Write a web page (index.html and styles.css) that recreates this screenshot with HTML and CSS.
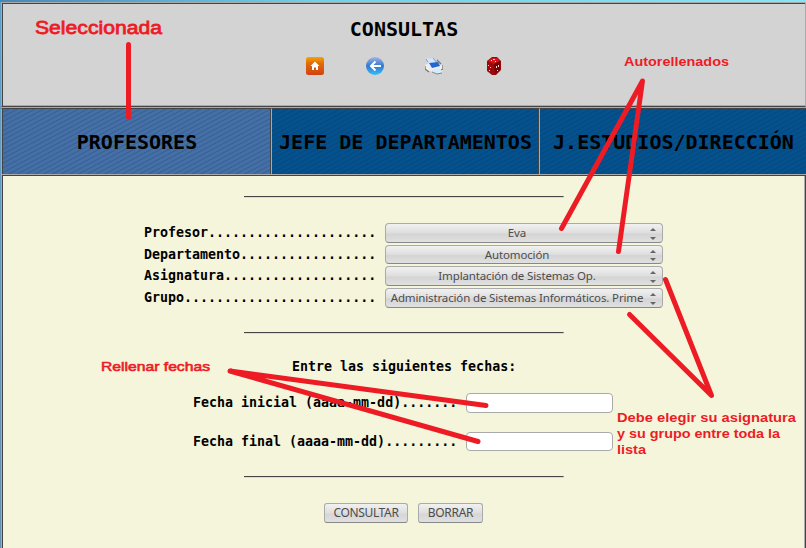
FILE: index.html
```html
<!DOCTYPE html>
<html lang="es">
<head>
<meta charset="utf-8">
<title>Consultas</title>
<link rel="stylesheet" href="styles.css">
</head>
<body>
<div class="page">
  <header class="header">
    <h1>CONSULTAS</h1>
    <nav class="icons">
      <svg viewBox="0 0 18 18"><defs><linearGradient id="home" x1="0" y1="0" x2="0" y2="1"><stop offset="0" stop-color="#f2a500"/><stop offset=".35" stop-color="#e26a0c"/><stop offset="1" stop-color="#cf4310"/></linearGradient></defs><rect width="18" height="18" rx="2.5" fill="url(#home)"/><path d="M9 4.500 4.500 9H6v4h2v-2.500h2V13h2V9h1.500z" fill="#fff"/></svg>
      <svg viewBox="0 0 18 18"><defs><linearGradient id="back" x1="0" y1="0" x2="0" y2="1"><stop offset="0" stop-color="#a6b4e4"/><stop offset=".5" stop-color="#2f78d0"/><stop offset="1" stop-color="#39c0f5"/></linearGradient></defs><circle cx="9" cy="9" r="9" fill="url(#back)"/><path d="M9.500 4.500 5 9l4.500 4.500M5 9h10" fill="none" stroke="#fff" stroke-width="2"/></svg>
      <svg viewBox="0 0 18 18"><path d="M0 8 4 6l13 2 1 5-6 3-11-3z" fill="#eee"/><path d="M0 9v3l4 3M18 8v4l-2 1M12 3l4 4" stroke="#777" stroke-width="1.300" fill="none"/><path d="m1 2 2-1 1 1 4-1 4 5-6 2z" fill="#d3e8ff"/><path d="m1 2 2 3M8 1l4 5" stroke="#6aa4e4" fill="none"/><path d="m4 6 9-1 2 4-8 2z" fill="#2467d0"/><path d="m7 13 7-2 4 4-6 2-5-2z" fill="#d4ecfa"/><path d="m7 15 5 2 5-1" stroke="#888" fill="none"/></svg>
      <svg viewBox="0 0 18 18"><path d="M7 0h5l4 4v9l-5 5H7l-5-4V4z" fill="#9d080c"/><path d="M3 4 7 1h5l3 3-6 3z" fill="#cf171a"/><path d="m9 7 6-3v9l-5 4z" fill="#710407"/><g fill="#ffdcd7"><path d="M8 2h2v1H8zM10 4h1v1h-1zM6 3h1v1H6zM3 8h1v1H3zM5 10h1v1H5zM4 13h1v1H4zM11 9h1v2h-1zM13 8h1v2h-1zM12 13h1v1h-1z"/></g></svg>
    </nav>
  </header>
  <nav class="tabs">
    <div class="tab selected">PROFESORES</div>
    <div class="tab">JEFE DE DEPARTAMENTOS</div>
    <div class="tab">J.ESTUDIOS/DIRECCIÓN</div>
  </nav>
  <main class="body">
    <hr>
    <section class="fields">
      <div class="row"><label>Profesor.....................</label><div class="select"><span>Eva</span><i></i></div></div>
      <div class="row"><label>Departamento.................</label><div class="select short"><span>Automoción</span><i></i></div></div>
      <div class="row"><label>Asignatura...................</label><div class="select"><span>Implantación de Sistemas Op.</span><i></i></div></div>
      <div class="row"><label>Grupo........................</label><div class="select"><span>Administración de Sistemas Informáticos. Prime</span><i></i></div></div>
    </section>
    <hr>
    <h2>Entre las siguientes fechas:</h2>
    <section class="dates">
      <div class="date"><label>Fecha inicial (aaaa-mm-dd).......</label><input type="text"></div>
      <div class="date"><label>Fecha final (aaaa-mm-dd).........</label><input class="short" type="text"></div>
    </section>
    <hr>
    <div class="buttons"><button class="b1">CONSULTAR</button><button class="b2">BORRAR</button></div>
  </main>
</div>
<svg class="notes" width="806" height="548" viewBox="0 0 806 548">
  <g class="strokes">
    <path d="M128.500 44.500V117"/>
    <path d="M561.500 228.500 642.500 81 618.500 251.500"/>
    <path d="M665.500 279.500 711.500 395.500 629.500 314.500"/>
    <path d="M486 405.500 230 371 478 441.500"/>
  </g>
  <g class="labels">
    <text class="big" x="35" y="34" textLength="127" lengthAdjust="spacingAndGlyphs">Seleccionada</text>
    <text x="624" y="66" textLength="105" lengthAdjust="spacingAndGlyphs">Autorellenados</text>
    <text class="light" x="101" y="371" textLength="109" lengthAdjust="spacingAndGlyphs">Rellenar fechas</text>
    <text x="617" y="422" textLength="179" lengthAdjust="spacingAndGlyphs">Debe elegir su asignatura</text>
    <text x="617" y="438" textLength="163" lengthAdjust="spacingAndGlyphs">y su grupo entre toda la</text>
    <text x="617" y="454" textLength="29" lengthAdjust="spacingAndGlyphs">lista</text>
  </g>
</svg>
</body>
</html>
```
FILE: styles.css
```css
* { box-sizing: border-box; }
body {
  margin: 0;
  width: 806px;
  height: 548px;
  overflow: hidden;
  position: relative;
  background: linear-gradient(90deg, #4a86b5, #6fd3ea 40%, #86e6f5);
  font: bold 13.3px/16px "DejaVu Sans Mono", monospace;
  color: #000;
}
.page { padding: 2px 0 0 1px; display: flex; flex-direction: column; height: 548px; background: linear-gradient(#5f9fc8, #6790b0) 0 2px / 1px 546px no-repeat; }
.header {
  height: 105px;
  background: #d3d3d3;
  border: 1px solid #aaa;
  border-bottom-color: #444;
  box-shadow: inset 1px 1px #444, inset 0 -1px #aaa;
  padding-top: 16px;
  text-align: center;
}
h1 { margin: 0; font-size: 20px; line-height: 20px; padding-left: 1px; }
.icons { display: flex; justify-content: center; gap: 41.5px; margin-top: 18px; padding-left: 2px; }
.icons svg { width: 18px; height: 18px; }
.tabs { height: 67px; display: grid; grid-template-columns: 270px 268px 267px; border-top: 1px solid #aaa; }
.tab {
  border-left: 1px solid #aaa;
  border-right: 1px solid #444;
  border-top: 1px solid #444;
  padding-left: 1px;
  display: flex;
  align-items: center;
  justify-content: center;
  white-space: nowrap;
  font-size: 20px;
  background: repeating-linear-gradient(152deg, #045190 0 2.300px, #064a7e 2.800px 3.600px, #045190 4.100px);
}
.tab:last-child { border-right: 0; }
.tab.selected { padding-left: 2px; box-shadow: inset 1px 0 #444; background: repeating-linear-gradient(152deg, #4470a7 0 2.300px, #3b6396 2.800px 3.600px, #4470a7 4.100px); }
.body {
  flex: 1;
  background: #f5f5dc;
  border: solid #aaa;
  border-width: 1px 0 0 1px;
  box-shadow: inset 1px 1px #444, inset -1px 0 #444, inset -2px 0 #aaa;
  padding-top: 21px;
}
hr { width: 320px; height: 2px; margin: 0 0 0 242px; border: 0; border-top: 1px solid #444; border-bottom: 1px solid #dcdcd4; border-right: 1px solid #dcdcd4; }
.fields { padding: 25px 0 23px 142px; display: grid; grid-template-rows: 22px 21px 22px 21px; }
.row { display: grid; grid-template-columns: 241px 278px; align-items: start; }
.row label { padding-top: 2px; }
label, h2 { white-space: pre; }
.select {
  height: 20px;
  border: 1px solid #aaa;
  border-bottom-color: #888;
  border-radius: 4px;
  background: linear-gradient(#f1f1f1, #dedede 50%, #d4d4d4 55%, #e0e0e0);
  display: flex;
  align-items: center;
  justify-content: center;
  font: 11.5px/18px "Noto Sans", sans-serif;
  letter-spacing: -.14px;
  color: #4c4c4c;
  padding: 0 17px 0 3px;
  position: relative;
  white-space: nowrap;
}
.short { height: 19px !important; }
.select i::before, .select i::after { content: ""; position: absolute; right: 6px; border: 3px solid transparent; }
.select i::before { top: 4px; border-top: 0; border-bottom-color: #666; }
.select i::after { bottom: 2px; border-bottom: 0; border-top-color: #666; }
h2 { margin: 23px 0 0 290px; font-size: 13.3px; line-height: 20px; }
.dates { padding: 16px 0 24px 191px; display: grid; gap: 19px; }
.date { display: grid; grid-template-columns: 273px 147px; height: 20px; }
.date label { padding-top: 2px; }
input { height: 20px; border: 1px solid #aaa; border-radius: 4px; background: #fff; }
.buttons { display: flex; gap: 10px; padding: 25px 0 0 322px; }
button { height: 20px; padding: 0; border: 1px solid #aaa; border-bottom-color: #888; border-radius: 3px; background: linear-gradient(#f1f1f1, #dedede 50%, #d6d6d6 55%, #e0e0e0); font: 12px/18px "Noto Sans", sans-serif; color: #4c4c4c; }
.b1 { width: 84px; letter-spacing: -.35px; }
.b2 { width: 65px; letter-spacing: -.3px; }
.notes { position: absolute; left: 0; top: 0; pointer-events: none; }
.strokes { fill: none; stroke: #ed1c24; stroke-width: 5px; stroke-linecap: round; stroke-linejoin: round; }
.labels { fill: #ed1c24; font: bold 13px "Liberation Sans", Arial, sans-serif; }
.labels .big { font-size: 19px; font-weight: normal; stroke: #ed1c24; stroke-width: .8px; }
.labels .light { font-weight: normal; stroke: #ed1c24; stroke-width: .6px; }
```
